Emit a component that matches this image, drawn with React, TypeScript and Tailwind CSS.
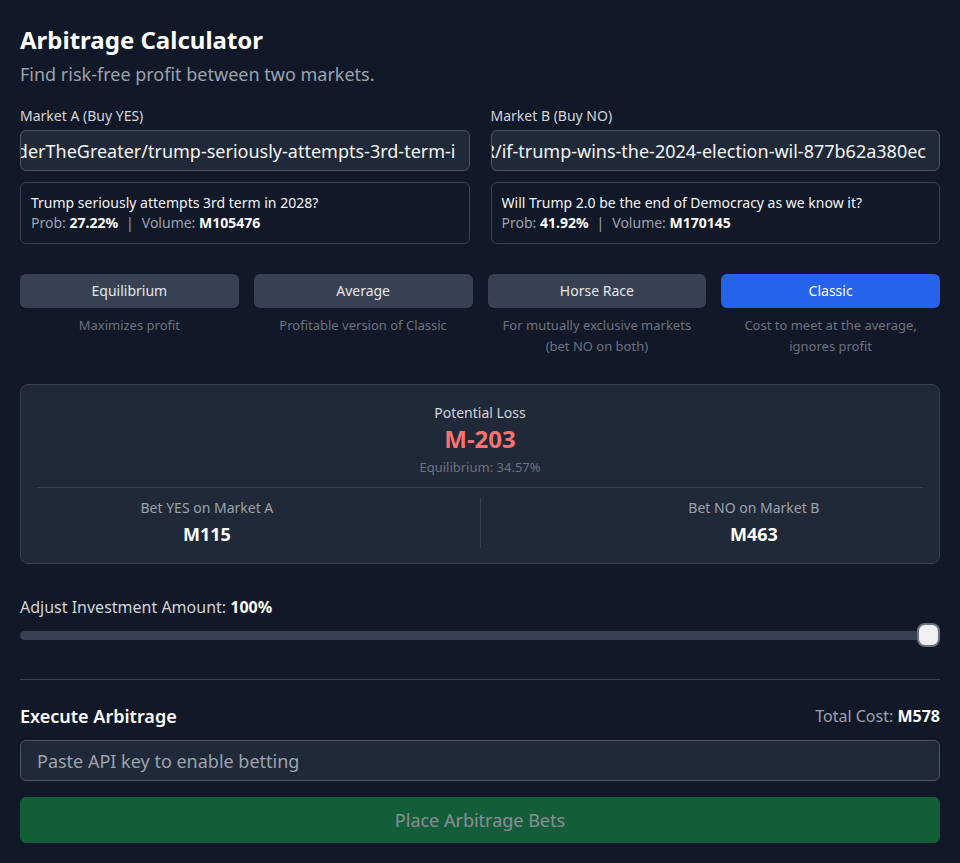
import React from "react";

const font = { fontFamily: '"Noto Sans", "Open Sans", sans-serif' };

function UrlBox({ text }: { text: string }) {
  return (
    <div className="mt-1 flex h-[41px] items-center justify-end overflow-hidden rounded-md border border-[#4b5563] bg-[#1f2937] px-[13px]">
      <span className="shrink-0 whitespace-nowrap text-lg text-[#f3f4f6]">{text}</span>
    </div>
  );
}

function Market({ label, url, title, prob, volume }: { label: string; url: string; title: string; prob: string; volume: string }) {
  return (
    <div className="min-w-0">
      <div className="text-sm text-[#d1d5db]">{label}</div>
      <UrlBox text={url} />
      <div className="mt-[11px] rounded-md border border-[#374151] px-2.5 py-2.5 text-sm">
        <div className="text-[#f3f4f6]">{title}</div>
        <div className="text-[#9ca3af]">
          Prob: <span className="font-bold text-white">{prob}</span>
          <span className="px-2">|</span>Volume: <span className="font-bold text-white">{volume}</span>
        </div>
      </div>
    </div>
  );
}

const modes: { name: string; lines: string[]; active?: boolean }[] = [
  { name: "Equilibrium", lines: ["Maximizes profit"] },
  { name: "Average", lines: ["Profitable version of Classic"] },
  { name: "Horse Race", lines: ["For mutually exclusive markets", "(bet NO on both)"] },
  { name: "Classic", lines: ["Cost to meet at the average,", "ignores profit"], active: true },
];

export default function App() {
  return (
    <div style={font} className="min-h-[863px] bg-[#111827] px-5 pb-5 pt-6 text-white">
      <h1 className="text-2xl font-bold leading-8">Arbitrage Calculator</h1>
      <p className="mt-1 text-lg text-[#9ca3af]">Find risk-free profit between two markets.</p>

      <div className="mt-[18px] grid grid-cols-2 gap-[21px]">
        <Market
          label="Market A (Buy YES)"
          url="https://manifold.markets/AlexanderTheGreater/trump-seriously-attempts-3rd-term-i"
          title="Trump seriously attempts 3rd term in 2028?"
          prob="27.22%"
          volume="M105476"
        />
        <Market
          label="Market B (Buy NO)"
          url="https://manifold.markets/JoshuaRR/if-trump-wins-the-2024-election-wil-877b62a380ec"
          title="Will Trump 2.0 be the end of Democracy as we know it?"
          prob="41.92%"
          volume="M170145"
        />
      </div>

      <div className="mt-[30px] grid grid-cols-4 gap-[15px]">
        {modes.map((m) => (
          <div key={m.name} className="flex flex-col items-center">
            <button
              className={
                m.active
                  ? "h-[34px] w-full rounded-md bg-[#2563eb] text-sm text-white"
                  : "h-[34px] w-full rounded-md bg-[#374151] text-sm text-[#e5e7eb]"
              }
            >
              {m.name}
            </button>
            <p className="mt-[7px] text-center text-[13px] leading-[21px] text-[#6b7280]">
              {m.lines.map((l, i) => (
                <span key={i} className="block whitespace-nowrap">
                  {l}
                </span>
              ))}
            </p>
          </div>
        ))}
      </div>

      <div className="mt-[27px] rounded-lg border border-[#374151] bg-[#1f2937] px-4 pb-[15px] pt-[18px]">
        <div className="flex flex-col items-center">
          <div className="text-sm text-[#d1d5db]">Potential Loss</div>
          <div className="text-2xl font-bold leading-8 text-[#f87171]">M-203</div>
          <div className="mt-1 text-[13px] leading-4 text-[#6b7280]">Equilibrium: 34.57%</div>
        </div>
        <div className="mt-3 flex justify-around border-t border-[#374151] pt-[10px]">
          <div className="flex flex-col items-center">
            <div className="text-sm text-[#9ca3af]">Bet YES on Market A</div>
            <div className="mt-0.5 text-lg font-bold text-white">M115</div>
          </div>
          <div className="w-px bg-[#374151]" />
          <div className="flex flex-col items-center">
            <div className="text-sm text-[#9ca3af]">Bet NO on Market B</div>
            <div className="mt-0.5 text-lg font-bold text-white">M463</div>
          </div>
        </div>
      </div>

      <div className="mt-[31px] text-base text-[#d1d5db]">
        Adjust Investment Amount: <span className="font-bold text-white">100%</span>
      </div>
      <div className="relative mt-1 flex h-6 items-center">
        <div className="h-[9px] w-full rounded-full bg-[#374151]" />
        <div className="absolute right-0 top-0 h-6 w-[23px] rounded-[8px] border-2 border-[#6b7280] bg-[#f0f0f0]" />
      </div>

      <div className="mt-[32px] border-t border-[#374151] pt-[22px]">
        <div className="flex items-center justify-between">
          <h2 className="text-lg font-semibold text-white">Execute Arbitrage</h2>
          <div className="text-base text-[#9ca3af]">
            Total Cost: <span className="font-bold text-white">M578</span>
          </div>
        </div>
        <div className="mt-[10px] flex h-[41px] items-center rounded-md border border-[#4b5563] bg-[#1f2937] px-4">
          <span className="text-lg text-[#9ca3af]">Paste API key to enable betting</span>
        </div>
        <button className="mt-4 flex h-[46px] w-full items-center justify-center rounded-md bg-[#16a34a] text-lg text-white opacity-50">
          Place Arbitrage Bets
        </button>
      </div>
    </div>
  );
}
